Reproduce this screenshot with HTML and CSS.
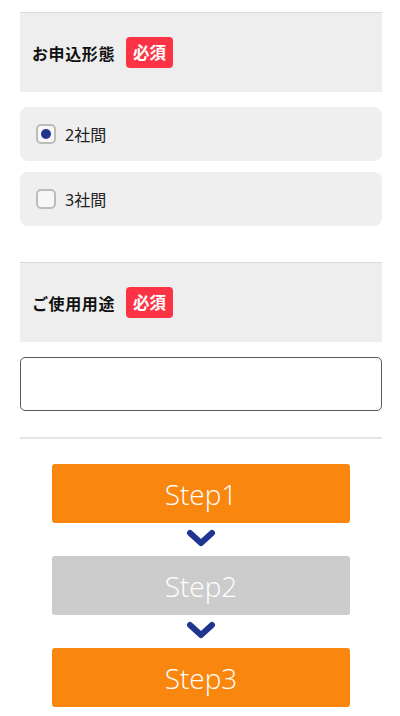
FILE: index.html
```html
<!DOCTYPE html>
<html lang="ja">
  <head>
    <meta charset="UTF-8" />
    <meta name="viewport" content="width=device-width, initial-scale=1.0" />
    <title>お申込フォーム</title>
    <link rel="stylesheet" href="styles.css">
  </head>
  <body>
    <div id="container">
      <div class="field">
        <div class="field-head">
          <span class="label">お申込形態</span>
          <span class="required">必須</span>
        </div>
        <div class="options">
          <label class="option">
            <span class="check checked"></span>
            <span class="option-text">2社間</span>
          </label>
          <label class="option">
            <span class="check"></span>
            <span class="option-text">3社間</span>
          </label>
        </div>
      </div>

      <div class="field">
        <div class="field-head">
          <span class="label">ご使用用途</span>
          <span class="required">必須</span>
        </div>
        <input type="text" class="text-input" name="purpose" />
      </div>

      <hr class="divider" />

      <div class="steps">
        <div class="step step-active">Step1</div>
        <svg class="arrow" width="30" height="20" viewBox="0 0 30 20">
          <path d="M4 4 L15 14 L26 4" fill="none" stroke="#1f3590" stroke-width="6" stroke-linecap="round" stroke-linejoin="round" />
        </svg>
        <div class="step step-off">Step2</div>
        <svg class="arrow" width="30" height="20" viewBox="0 0 30 20">
          <path d="M4 4 L15 14 L26 4" fill="none" stroke="#1f3590" stroke-width="6" stroke-linecap="round" stroke-linejoin="round" />
        </svg>
        <div class="step step-active">Step3</div>
      </div>
    </div>
  </body>
</html>
```

FILE: styles.css
```css
html,
body {
  background-color: #fff;
  padding: 0;
  margin: 0;
  width: 100%;
  font-family: 'Noto Sans CJK JP', 'Noto Sans', sans-serif;
  color: #111;
}

#container {
  margin: 0 18px 0 20px;
  padding-top: 12px;
}

.field-head {
  display: flex;
  align-items: center;
  height: 79px;
  border-top: 1px solid #d9d9d9;
  background-color: #eee;
  padding-left: 12px;
}

.label {
  font-size: 16px;
  font-weight: bold;
  letter-spacing: 0.6px;
}

.required {
  margin-left: 11px;
  background-color: #fc3344;
  color: #fff;
  font-size: 16.5px;
  font-weight: bold;
  line-height: 31px;
  padding: 0 7px;
  border-radius: 4px;
}

.options {
  padding: 15px 0 36px;
  display: flex;
  flex-direction: column;
  gap: 11px;
}

.option {
  display: flex;
  align-items: center;
  height: 54px;
  padding-left: 16px;
  background-color: #efefef;
  border-radius: 8px;
}

.check {
  box-sizing: border-box;
  width: 20px;
  height: 20px;
  border: 2px solid #bcbcbc;
  border-radius: 5px;
  background-color: #f7f7f7;
  display: flex;
  align-items: center;
  justify-content: center;
}

.check.checked::after {
  content: '';
  width: 10px;
  height: 10px;
  border-radius: 50%;
  background-color: #1f3590;
}

.option-text {
  margin-left: 9px;
  font-family: 'Noto Sans', 'Noto Sans CJK JP', sans-serif;
  font-size: 16px;
  color: #222;
}

.text-input {
  display: block;
  box-sizing: border-box;
  width: 100%;
  height: 54px;
  margin-top: 15px;
  border: 1px solid #5a5a5a;
  border-radius: 5px;
  background: #fff;
}

.divider {
  border: 0;
  height: 2px;
  background-color: #e5e5e5;
  margin: 26px 0 25px;
}

.steps {
  display: flex;
  flex-direction: column;
  align-items: center;
}

.step {
  width: 298px;
  height: 59px;
  border-radius: 3px;
  color: #fff;
  font-family: 'Open Sans', 'Noto Sans', sans-serif;
  font-size: 28px;
  font-weight: 300;
  display: flex;
  align-items: center;
  justify-content: center;
}

.step-active {
  background-color: #f8860f;
}

.step-off {
  background-color: #ccc;
}

.arrow {
  display: block;
  margin: 6px 0 7px;
}
```
